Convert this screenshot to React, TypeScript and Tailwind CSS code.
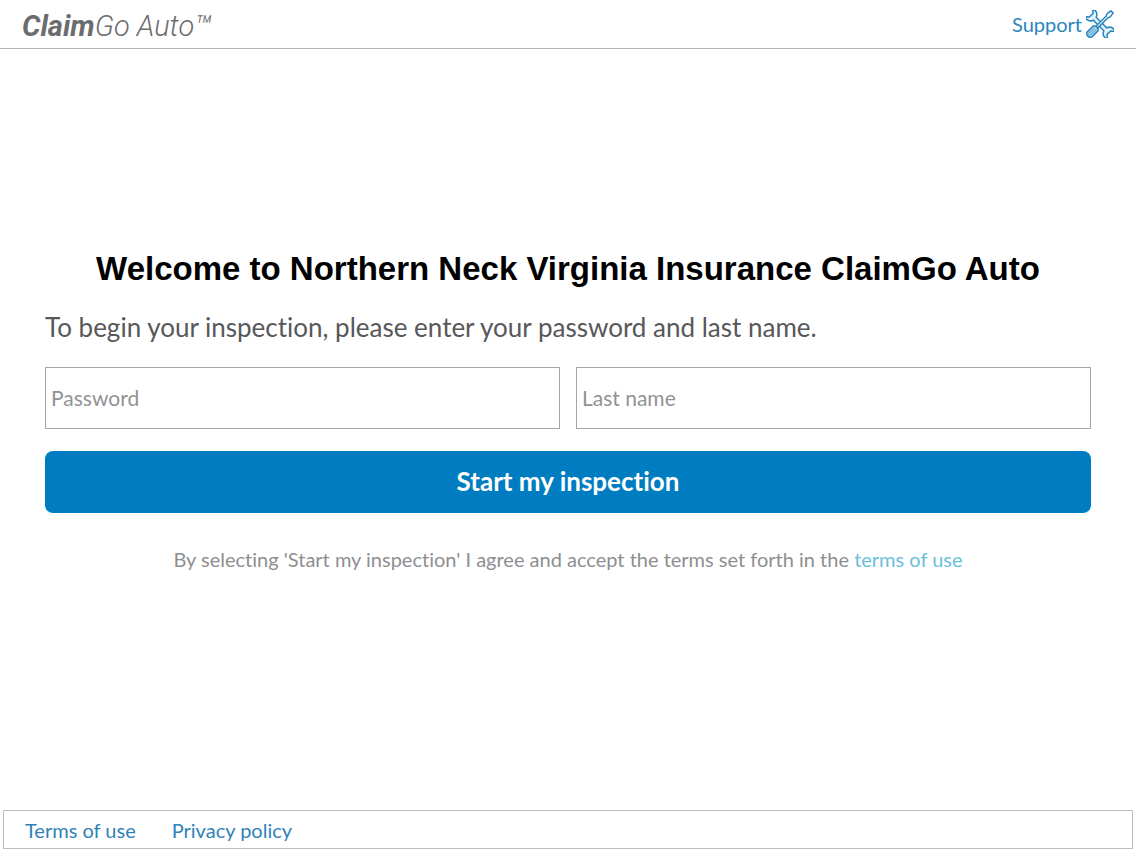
import { useState } from "react";

const footerLinks = [
    { label: "Terms of use", href: "#terms" },
    { label: "Privacy policy", href: "#privacy" },
];

function ToolsIcon() {
    return (
        <svg viewBox="0 0 28 28" className="size-7" fill="none" stroke="#2b86bd" strokeWidth="1.5" strokeLinejoin="round" strokeLinecap="round" aria-hidden="true">
            {/* Wrench */}
            <path
                transform="translate(14 14) rotate(45)"
                fill="#e3f3fb"
                d="M-7.5 -2H7.5C8.5 -5.4 12 -7.2 16 -5.4L12.4 -2.6V2.6L16 5.4C12 7.2 8.5 5.4 7.5 2H-7.5C-8.5 5.4 -12 7.2 -16 5.4L-12.4 2.6V-2.6L-16 -5.4C-12 -7.2 -8.5 -5.4 -7.5 -2Z"
            />
            {/* Screwdriver */}
            <g transform="translate(14 14) rotate(-45)">
                <path fill="#ffffff" d="M-5 -1.2H10L12 -2.2L17 -1.6V1.6L12 2.2L10 1.2H-5Z" />
                <path fill="#a9d5ec" d="M-14.5 -3.4H-7C-5.4 -3.4 -4.4 -2 -4.4 0S-5.4 3.4 -7 3.4H-14.5C-18 3.4 -18 -3.4 -14.5 -3.4Z" />
                <path strokeWidth="0.8" d="M-15 -1.1H-7M-15 1.1H-7" />
            </g>
        </svg>
    );
}

function Header() {
    return (
        <header className="flex h-[49px] items-center justify-between border-b border-[#b5b5b5] px-[22px]">
            <a href="#home" className="pt-1 font-[Roboto,'Liberation_Sans',sans-serif] text-[29px] leading-9 text-[#6b6c6e] italic">
                <span className="font-bold">Claim</span>
                <span className="font-light">Go Auto™</span>
            </a>
            <a href="#support" className="flex items-center gap-1 text-xl text-[#2b86bd]">
                Support
                <ToolsIcon />
            </a>
        </header>
    );
}

export default function App() {
    const [password, setPassword] = useState("");
    const [lastName, setLastName] = useState("");

    return (
        <div className="flex min-h-screen flex-col bg-white font-[Lato,'Open_Sans',sans-serif] [font-variant-ligatures:none]">
            <Header />

            <main className="flex flex-1 flex-col justify-center px-[45px] pb-9">
                <h1 className="text-center font-['Liberation_Sans',Arial,sans-serif] text-[33px] leading-9 font-bold text-black">
                    Welcome to Northern Neck Virginia Insurance ClaimGo Auto
                </h1>
                <p className="mt-6 text-[26px] leading-8 text-[#58585a]">
                    To begin your inspection, please enter your password and last name.
                </p>

                <form onSubmit={(e) => e.preventDefault()}>
                    <div className="mt-6 grid grid-cols-2 gap-4">
                        <input
                            type="password"
                            aria-label="Password"
                            placeholder="Password"
                            value={password}
                            onChange={(e) => setPassword(e.target.value)}
                            className="h-[62px] border border-[#a5a5a8] px-[5px] text-[21px] text-[#58585a] placeholder:text-[#929295]"
                        />
                        <input
                            type="text"
                            aria-label="Last name"
                            placeholder="Last name"
                            value={lastName}
                            onChange={(e) => setLastName(e.target.value)}
                            className="h-[62px] border border-[#a5a5a8] px-[5px] text-[21px] text-[#58585a] placeholder:text-[#929295]"
                        />
                    </div>
                    <button type="submit" className="mt-[22px] h-[62px] w-full rounded-lg bg-[#007dc0] text-[26px] font-bold text-white">
                        Start my inspection
                    </button>
                </form>

                <p className="mt-8 text-center text-xl leading-7 text-[#8e8e91]">
                    By selecting 'Start my inspection' I agree and accept the terms set forth in the{" "}
                    <a href="#terms" className="text-[#6abfdc]">terms of use</a>
                </p>
            </main>

            <footer className="m-[3px] mt-0 flex h-[39px] items-center gap-9 border border-[#bcbcbc] px-[21px] text-xl text-[#2f82b8]">
                {footerLinks.map((link) => (
                    <a key={link.label} href={link.href}>{link.label}</a>
                ))}
            </footer>
        </div>
    );
}
